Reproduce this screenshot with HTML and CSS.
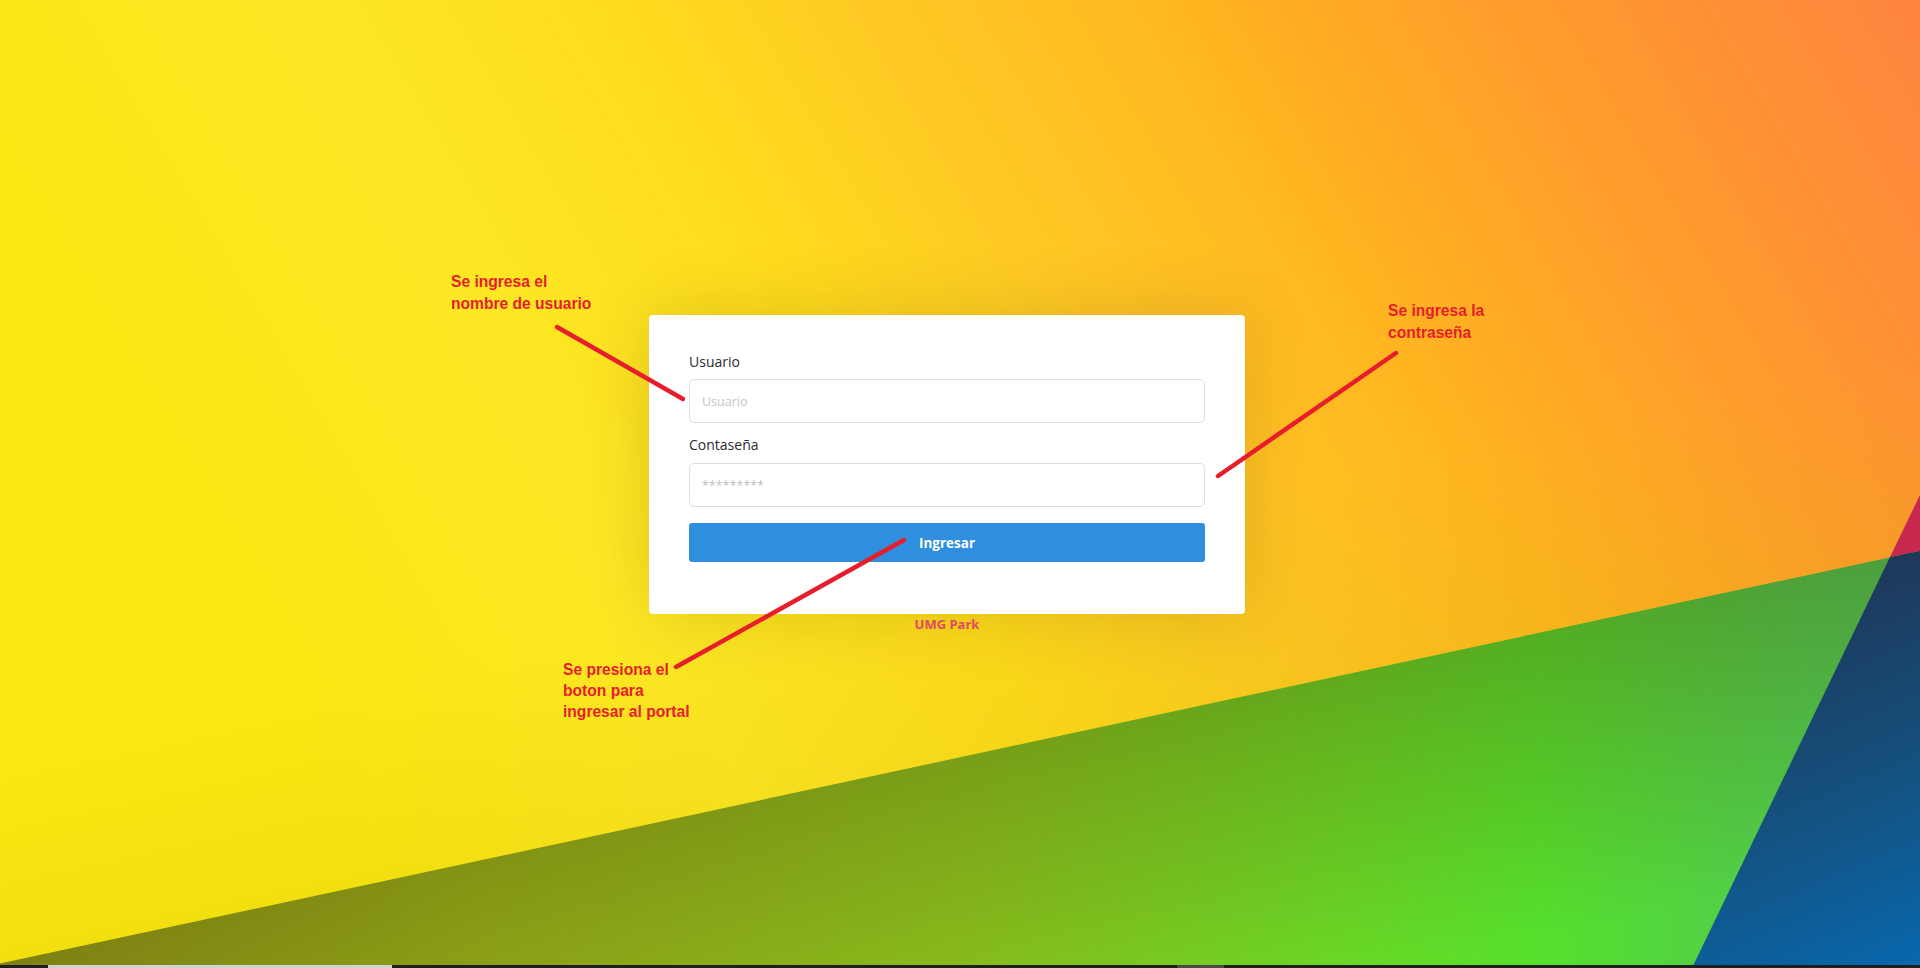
FILE: index.html
```html
<!DOCTYPE html>
<html lang="es">
<head>
<meta charset="utf-8">
<title>UMG Park - Ingreso</title>
<link rel="stylesheet" href="styles.css">
</head>
<body>
<div class="page">
  <svg class="backdrop" viewBox="0 0 1920 968" preserveAspectRatio="none" aria-hidden="true">
    <defs>
      <linearGradient id="gTop" gradientUnits="userSpaceOnUse" x1="400" y1="900" x2="1920" y2="0">
        <stop offset="0" stop-color="#f9e812"/>
        <stop offset="0.2" stop-color="#fde824"/>
        <stop offset="0.36" stop-color="#fedc1c"/>
        <stop offset="0.5" stop-color="#ffc824"/>
        <stop offset="0.65" stop-color="#ffb420"/>
        <stop offset="0.8" stop-color="#ff9c2c"/>
        <stop offset="1" stop-color="#ff8440"/>
      </linearGradient>
      <linearGradient id="gTopShade" gradientUnits="userSpaceOnUse" x1="960" y1="757" x2="918" y2="560">
        <stop offset="0" stop-color="#c8a800" stop-opacity="0.14"/>
        <stop offset="1" stop-color="#c8a800" stop-opacity="0"/>
      </linearGradient>
      <linearGradient id="gGreen" gradientUnits="userSpaceOnUse" x1="0" y1="900" x2="1920" y2="900">
        <stop offset="0" stop-color="#949e16"/>
        <stop offset="0.25" stop-color="#9cb81a"/>
        <stop offset="0.5" stop-color="#8ec81e"/>
        <stop offset="0.7" stop-color="#6ada26"/>
        <stop offset="0.8" stop-color="#56e02c"/>
        <stop offset="0.9" stop-color="#52d046"/>
        <stop offset="1" stop-color="#4cc85a"/>
      </linearGradient>
      <linearGradient id="gGreenShade" gradientUnits="userSpaceOnUse" x1="960" y1="757" x2="1023" y2="1050">
        <stop offset="0" stop-color="#4a3c08" stop-opacity="0.3"/>
        <stop offset="1" stop-color="#4a3c08" stop-opacity="0"/>
      </linearGradient>
      <linearGradient id="gBlue" gradientUnits="userSpaceOnUse" x1="1760" y1="600" x2="1920" y2="968">
        <stop offset="0" stop-color="#1f3658"/>
        <stop offset="0.5" stop-color="#15507c"/>
        <stop offset="1" stop-color="#0868ae"/>
      </linearGradient>
    </defs>
    <rect x="0" y="0" width="1920" height="968" fill="url(#gTop)"/>
    <polygon points="0,0 1920,0 1920,551 0,963.6" fill="url(#gTopShade)"/>
    <polygon points="0,963.6 1920,551 1920,968 0,968" fill="url(#gGreen)"/>
    <polygon points="0,963.6 1920,551 1920,968 0,968" fill="url(#gGreenShade)"/>
    <polygon points="1890,557 1920,495 1920,551" fill="#c6284e"/>
    <polygon points="1692,968 1890,557 1920,551 1920,968" fill="url(#gBlue)"/>
  </svg>

  <main class="stage">
    <form class="card" onsubmit="return false">
      <label class="field-label" for="usuario">Usuario</label>
      <input id="usuario" class="field" type="text" placeholder="Usuario">
      <label class="field-label field-label--next" for="clave">Contaseña</label>
      <input id="clave" class="field field--pass" type="password" placeholder="*********">
      <button class="btn" type="submit">Ingresar</button>
    </form>
    <p class="brand">UMG Park</p>
  </main>

  <svg class="pointers" viewBox="0 0 1920 968" aria-hidden="true">
    <line x1="557" y1="327" x2="683" y2="399"/>
    <line x1="1396" y1="353" x2="1218" y2="476"/>
    <line x1="676" y1="667" x2="904" y2="540"/>
  </svg>
  <p class="note note--user">Se ingresa el<br>nombre de usuario</p>
  <p class="note note--pass">Se ingresa la<br>contraseña</p>
  <p class="note note--btn">Se presiona el<br>boton para<br>ingresar al portal</p>

  <div class="taskbar">
    <span class="task task--a"></span>
    <span class="task task--b"></span>
  </div>
</div>
</body>
</html>
```

FILE: styles.css
```css
* {
  box-sizing: border-box;
}

html,
body {
  margin: 0;
  padding: 0;
  height: 100%;
}

body {
  font-family: "Open Sans", "Lato", "DejaVu Sans", sans-serif;
  overflow: hidden;
}

.page {
  position: relative;
  width: 100%;
  height: 968px;
  display: flex;
  flex-direction: column;
  overflow: hidden;
}

.backdrop {
  position: absolute;
  inset: 0;
  width: 100%;
  height: 100%;
  z-index: 0;
}

.stage {
  position: relative;
  z-index: 1;
  flex: 1;
  display: flex;
  flex-direction: column;
  align-items: center;
  padding-top: 315px;
  padding-right: 26px;
}

.card {
  width: 596px;
  background: #ffffff;
  border-radius: 4px;
  padding: 36px 40px 52px;
  display: flex;
  flex-direction: column;
  box-shadow: 0 0 70px rgba(60, 40, 0, 0.16);
}

.field-label {
  font-size: 14px;
  line-height: 21px;
  color: #2a2a2e;
  margin-bottom: 7px;
}

.field-label--next {
  margin-top: 11px;
  margin-bottom: 8px;
}

.field {
  height: 44px;
  width: 100%;
  border: 1px solid #dedede;
  border-radius: 5px;
  padding: 0 12px;
  font-family: inherit;
  font-size: 12.5px;
  color: #333;
  background: #fff;
  outline: none;
}

.field::placeholder {
  color: #c4c4c4;
}

.field--pass::placeholder {
  color: #bdbdbd;
  font-size: 12px;
  letter-spacing: 0.3px;
}

.btn {
  margin-top: 16px;
  height: 39px;
  width: 100%;
  border: none;
  border-radius: 3px;
  background: #2f8fde;
  color: #ffffff;
  font-family: inherit;
  font-size: 13.5px;
  font-weight: 700;
  cursor: pointer;
}

.brand {
  margin: 2px 0 0;
  font-size: 13px;
  line-height: 16px;
  font-weight: 700;
  color: #e24862;
}

.pointers {
  position: absolute;
  inset: 0;
  width: 100%;
  height: 968px;
  z-index: 2;
  pointer-events: none;
}

.pointers line {
  stroke: #e81d2b;
  stroke-width: 4.5;
  stroke-linecap: round;
}

.note {
  position: absolute;
  z-index: 3;
  margin: 0;
  font-family: "Liberation Sans", Arial, sans-serif;
  font-weight: 700;
  font-size: 15.6px;
  line-height: 22px;
  color: #e81d2b;
  white-space: nowrap;
}

.note--user {
  left: 451px;
  top: 271px;
}

.note--pass {
  left: 1388px;
  top: 300px;
}

.note--btn {
  left: 563px;
  top: 659px;
  line-height: 21px;
}

.taskbar {
  position: relative;
  z-index: 4;
  height: 3px;
  background: #1f1f1f;
  display: flex;
  align-items: stretch;
}

.task {
  display: block;
}

.task--a {
  margin-left: 48px;
  width: 344px;
  background: #d2d2d2;
}

.task--b {
  margin-left: 785px;
  width: 47px;
  background: #4a4a4a;
}
```
